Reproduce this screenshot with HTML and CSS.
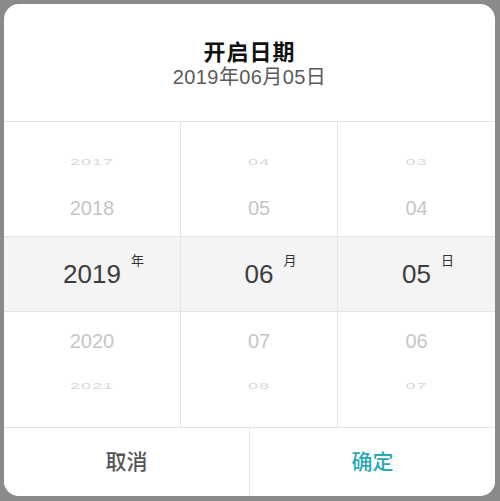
FILE: index.html
```html
<!DOCTYPE html>
<html lang="zh-CN">
<head>
<meta charset="utf-8">
<title>开启日期</title>
<link rel="stylesheet" href="styles.css">
</head>
<body>
<div class="dialog">
  <header class="head">
    <h1 class="title">开启日期</h1>
    <p class="sub">2019年06月05日</p>
  </header>
  <div class="picker">
    <div class="col">
      <div class="above"><span class="item far">2017</span><span class="item near">2018</span></div>
      <div class="band"><span class="val">2019<span class="unit">年</span></span></div>
      <div class="below"><span class="item near">2020</span><span class="item far">2021</span></div>
    </div>
    <div class="col">
      <div class="above"><span class="item far">04</span><span class="item near">05</span></div>
      <div class="band"><span class="val">06<span class="unit">月</span></span></div>
      <div class="below"><span class="item near">07</span><span class="item far">08</span></div>
    </div>
    <div class="col">
      <div class="above"><span class="item far">03</span><span class="item near">04</span></div>
      <div class="band"><span class="val">05<span class="unit">日</span></span></div>
      <div class="below"><span class="item near">06</span><span class="item far">07</span></div>
    </div>
  </div>
  <div class="actions">
    <button class="btn cancel">取消</button>
    <button class="btn ok">确定</button>
  </div>
</div>
</body>
</html>
```
FILE: styles.css
```css
* { box-sizing: border-box; }
html, body { margin: 0; padding: 0; }
body {
  background: #8a8a8a;
  padding: 4px;
  width: 500px;
  height: 501px;
  font-family: "Liberation Sans", "Noto Sans CJK SC", sans-serif;
}
.dialog {
  width: 491px;
  height: 492px;
  background: #fff;
  border-radius: 15px;
  overflow: hidden;
  display: flex;
  flex-direction: column;
}
.head {
  height: 118px;
  border-bottom: 1px solid #e4e4e4;
  display: flex;
  flex-direction: column;
  align-items: center;
  padding-top: 32px;
}
.title {
  margin: 0;
  font-family: "Noto Sans CJK SC", sans-serif;
  font-weight: 700;
  font-size: 22px;
  letter-spacing: 1px;
  line-height: 28px;
  color: #111;
}
.sub {
  margin: 0;
  font-size: 20px;
  letter-spacing: 0.4px;
  line-height: 26px;
  color: #5a5a5a;
}
.sub, .unit { font-family: "Liberation Sans", "Noto Sans CJK SC", sans-serif; }
.picker {
  display: grid;
  grid-template-columns: 177px 157px 1fr;
  height: 305px;
}
.col {
  display: flex;
  flex-direction: column;
  border-right: 1px solid #e4e4e4;
}
.col:last-child { border-right: 0; }
.above {
  height: 115px;
  border-bottom: 1px solid #e4e4e4;
  padding-top: 17px;
  display: flex;
  flex-direction: column;
  align-items: center;
}
.below {
  height: 115px;
  padding-top: 7px;
  display: flex;
  flex-direction: column;
  align-items: center;
}
.above .item { height: 46px; }
.below .item { height: 45px; }
.item {
  display: flex;
  align-items: center;
  justify-content: center;
}
.near {
  font-size: 20px;
  color: #c6c6c6;
}
.far {
  font-size: 18px;
  letter-spacing: 1px;
  color: #d8d8d8;
  transform: scaleY(0.5);
}
.band {
  height: 75px;
  background: #f4f4f4;
  border-bottom: 1px solid #e4e4e4;
  display: flex;
  align-items: center;
  justify-content: center;
}
.val {
  position: relative;
  font-size: 26px;
  line-height: 30px;
  color: #3c3c3c;
}
.unit {
  position: absolute;
  left: 100%;
  top: -6px;
  margin-left: 10px;
  font-family: "Noto Sans CJK SC", sans-serif;
  font-size: 13px;
  line-height: 14px;
  color: #333;
}
.actions {
  flex: 1;
  display: grid;
  grid-template-columns: 246px 1fr;
  border-top: 1px solid #e4e4e4;
}
.btn {
  border: 0;
  background: #fff;
  font-family: "Noto Sans CJK SC", sans-serif;
  font-size: 21px;
  font-weight: 500;
  padding: 0 0 4px;
  margin: 0;
}
.cancel { color: #555; border-right: 1px solid #e4e4e4; }
.ok { color: #2aa9b4; }
```
